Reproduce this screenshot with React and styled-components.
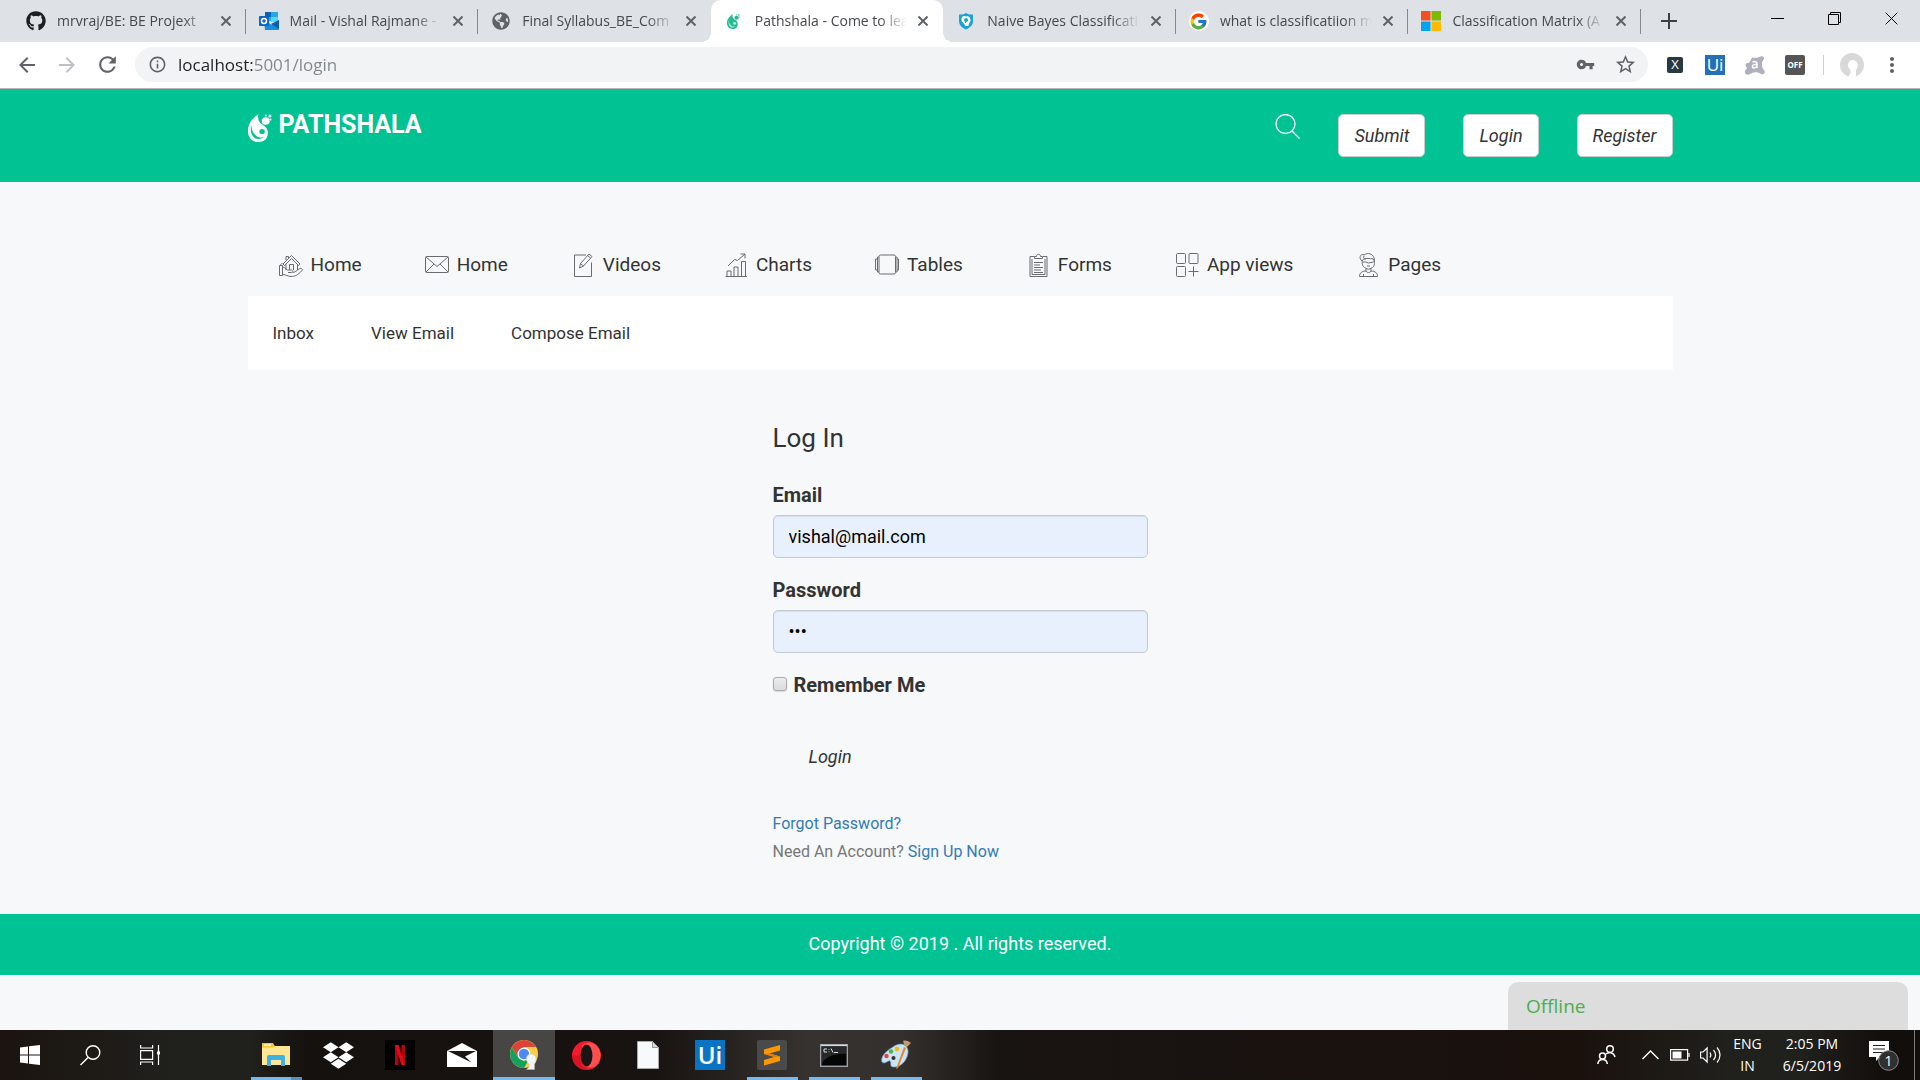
import React from "react";
import styled, { createGlobalStyle, css } from "styled-components";
import { FaGithub, FaDropbox, FaGlobeAmericas } from "react-icons/fa";
import { FcGoogle } from "react-icons/fc";
import {
  MdArrowBack,
  MdArrowForward,
  MdRefresh,
  MdInfoOutline,
  MdVpnKey,
  MdStarBorder,
  MdMoreVert,
} from "react-icons/md";

const GlobalStyle = createGlobalStyle`
  *, *::before, *::after { box-sizing: border-box; }
  body { margin: 0; background: #f6f8fa; color: #333; font: 18px/26px Roboto, sans-serif; }
  button, input { font: inherit; color: inherit; }
  svg { display: block; flex: none; }
`;

const green = "#00c292";
const systemFont = '"Open Sans", "Noto Sans", sans-serif';

const Screen = styled.div`
  display: flex;
  flex-direction: column;
  min-height: 100vh;
`;

const PlainButton = styled.button`
  display: flex;
  align-items: center;
  justify-content: center;
  padding: 0;
  border: 0;
  background: none;
`;

/* ---------- browser window ---------- */

const TabStrip = styled.div`
  display: flex;
  height: 42px;
  padding-left: 13px;
  background: #dee1e6;
  font-family: ${systemFont};
`;

const Tabs = styled.div`
  display: flex;
  flex: 1;
  min-width: 0;
`;

const Tab = styled.div`
  position: relative;
  display: flex;
  align-items: center;
  flex: 1 1 0;
  min-width: 0;
  padding: 0 12px 0 13px;
  ${(p) =>
    p.$active
      ? css`
          background: #fff;
          border-radius: 10px 10px 0 0;
          &::before,
          &::after {
            content: "";
            position: absolute;
            bottom: 0;
            width: 10px;
            height: 10px;
          }
          &::before {
            right: 100%;
            background: radial-gradient(circle at 0 0, transparent 10px, #fff 10px);
          }
          &::after {
            left: 100%;
            background: radial-gradient(circle at 100% 0, transparent 10px, #fff 10px);
          }
        `
      : ""}
  ${(p) =>
    p.$divider
      ? css`
          &::after {
            content: "";
            position: absolute;
            right: 0;
            top: 9px;
            width: 1px;
            height: 25px;
            background: #85888c;
          }
        `
      : ""}
`;

const TabButton = styled(PlainButton)`
  flex: 1;
  min-width: 0;
  justify-content: flex-start;
  gap: 11px;
  height: 42px;
`;

const TabTitle = styled.span`
  flex: 1;
  min-width: 0;
  white-space: nowrap;
  text-align: left;
  font-size: 14px;
  line-height: 20px;
  color: #45484c;
  mask-image: linear-gradient(to right, #000 calc(100% - 28px), transparent);
`;

const TabClose = styled(PlainButton)`
  width: 16px;
  height: 16px;
  margin-left: 8px;
`;

const WindowControls = styled.div`
  display: flex;
  align-items: center;
  width: 279px;
`;

const NewTab = styled(PlainButton)`
  width: 56px;
  height: 42px;
`;

const CaptionButton = styled(PlainButton)`
  width: 57px;
  height: 36px;
  align-self: flex-start;
  &:nth-child(2) {
    margin-left: auto;
  }
`;

const Toolbar = styled.div`
  display: flex;
  align-items: center;
  height: 47px;
  padding: 0 8px 1px 7px;
  background: #fff;
  border-bottom: 1px solid #b6b4b6;
  color: #5f6368;
  font-family: ${systemFont};
`;

const ToolButton = styled(PlainButton)`
  width: 40px;
  height: 34px;
  color: ${(p) => (p.disabled ? "#bdc1c6" : "#5f6368")};
`;

const Omnibox = styled.div`
  display: flex;
  align-items: center;
  flex: 1;
  height: 35px;
  margin: 0 7px 0 8px;
  padding: 0 3px 0 13px;
  border-radius: 18px;
  background: #f1f3f4;
`;

const Address = styled.input`
  flex: 1;
  min-width: 0;
  height: 35px;
  margin-left: 11px;
  padding: 0;
  border: 0;
  outline: 0;
  font-size: 17px;
  background: linear-gradient(to right, #202124 75px, #80868b 75px);
  background-clip: text;
  -webkit-text-fill-color: transparent;
`;

const ToolDivider = styled.span`
  width: 1px;
  height: 20px;
  margin: 0 8px;
  background: #cdd0d4;
`;

/* ---------- web page ---------- */

const Page = styled.div`
  position: relative;
  flex: 1;
  background: #f6f8fa;
`;

const Container = styled.div`
  width: 100%;
  max-width: 1425px;
  margin: 0 auto;
`;

const Header = styled.header`
  padding: 25px 0;
  background: ${green};
`;

const HeaderRow = styled(Container)`
  display: flex;
  align-items: flex-start;
`;

const Brand = styled.a`
  display: flex;
  gap: 7px;
  margin-right: auto;
  color: #fff;
  font-size: 25px;
  font-weight: 700;
  line-height: 22px;
  text-decoration: none;
`;

const HeaderActions = styled.div`
  display: flex;
  align-items: flex-start;
  gap: 38px;
`;

const ActionButton = styled.button`
  height: 43px;
  padding: 0 15px;
  border: 1px solid #ccc;
  border-radius: 5px;
  background: #fff;
  font-size: 18px;
  font-style: italic;
`;

const MainNav = styled.nav`
  display: flex;
  gap: 63px;
  padding: 69px 31px 17px;
`;

const NavLink = styled.a`
  display: flex;
  align-items: center;
  gap: 8px;
  color: #333;
  font-size: 19px;
  line-height: 28px;
  text-decoration: none;
`;

const SubNav = styled.nav`
  display: flex;
  gap: 57px;
  padding: 24px 25px;
  background: #fff;
`;

const SubLink = styled.a`
  color: #333;
  font-size: 17px;
  text-decoration: none;
`;

const LoginForm = styled.form`
  width: 375px;
  margin: 0 auto;
  padding: 54px 0 48px;
`;

const Title = styled.h1`
  margin: 0 0 30px;
  font-size: 26px;
  font-weight: 400;
  line-height: 28px;
`;

const Field = styled.div`
  display: flex;
  flex-direction: column;
  gap: 7px;
  margin-bottom: 19px;
`;

const Label = styled.label`
  font-size: 20px;
  font-weight: 700;
`;

const TextInput = styled.input`
  width: 100%;
  height: 43px;
  padding: 0 15px;
  border: 1px solid #c6c9cf;
  border-radius: 5px;
  outline: 0;
  background: #e8f0fe;
  box-shadow: inset 0 1px 1px rgba(0, 0, 0, 0.08);
  color: #000;
  font-size: 18px;
`;

const CheckRow = styled.div`
  display: flex;
  align-items: center;
  gap: 7px;
`;

const Checkbox = styled.input`
  appearance: none;
  width: 14px;
  height: 14px;
  margin: 0 0 3px;
  border: 1px solid #a9a9a9;
  border-radius: 3px;
  background: linear-gradient(#ececec, #dcdcdc);
  box-shadow: 0 1px 1px rgba(0, 0, 0, 0.12);
`;

const SubmitLink = styled.button`
  display: block;
  height: 43px;
  margin: 37px 0 32px;
  padding: 0 36px;
  border: 0;
  background: none;
  font-size: 18px;
  font-style: italic;
`;

const FormNote = styled.p`
  margin: 0;
  color: #777;
  font-size: 16px;
  line-height: 28px;
  a {
    color: #337ab7;
    text-decoration: none;
  }
`;

const Footer = styled.footer`
  padding: 17px 0 18px;
  background: ${green};
  color: #fff;
  text-align: center;
`;

const ChatStatus = styled.button`
  position: absolute;
  right: 12px;
  bottom: 0;
  width: 400px;
  height: 48px;
  padding: 0 18px;
  border: 0;
  border-radius: 10px 10px 0 0;
  background: #ddd;
  color: #4cae4c;
  font-family: ${systemFont};
  font-size: 19px;
  text-align: left;
`;

/* ---------- desktop taskbar ---------- */

const Taskbar = styled.div`
  display: flex;
  height: 50px;
  background: linear-gradient(
    to right,
    #1b1410 0,
    #20201c 9%,
    #20201c 13%,
    #15110f 16%,
    #181310 34%,
    #35322f 42%,
    #33302d 47%,
    #181412 52%,
    #1a110d 82%,
    #20201c 90%,
    #20201c 94%,
    #120e0c 98%
  );
  color: #fff;
  font-family: ${systemFont};
`;

const SystemButtons = styled.div`
  display: flex;
  width: 245px;
`;

const SystemButton = styled(PlainButton)`
  width: 60px;
  height: 50px;
`;

const Apps = styled.div`
  display: flex;
`;

const AppButton = styled(PlainButton)`
  position: relative;
  width: 62px;
  height: 50px;
  background: ${(p) => (p.$active ? "#484644" : "none")};
  &::after {
    content: "";
    display: ${(p) => (p.$running || p.$active ? "block" : "none")};
    position: absolute;
    bottom: 0;
    left: ${(p) => (p.$active ? "0" : "6px")};
    right: ${(p) => (p.$active ? "0" : "5px")};
    height: 3px;
    background: ${(p) =>
      p.$grouped ? "linear-gradient(to right, #76b9ed 40px, #5a8db8 40px)" : "#76b9ed"};
  }
`;

const Tray = styled.div`
  display: flex;
  align-items: center;
  margin-left: auto;
  padding-right: 5px;
`;

const TrayButton = styled(PlainButton)`
  width: ${(p) => p.$width || 30}px;
  height: 50px;
`;

const TrayText = styled(PlainButton)`
  flex-direction: column;
  width: ${(p) => p.$width}px;
  height: 50px;
  font-size: 14px;
  line-height: 22px;
`;

const ShowDesktop = styled.span`
  width: 1px;
  height: 50px;
  background: #7b7977;
`;

/* ---------- drawings ---------- */

const DropShape = ({ width, height, fill, hole }) => (
  <svg width={width} height={height} viewBox="1 1 23 28" preserveAspectRatio="none">
    <path d="M11 1C4 6 0 13 1 20c1 6 5 9 10 9 6 0 9-4 9-9 0-5-3-7-6-9-3-2-4-6-3-10z" fill={fill} />
    <path d="M4 12c-1 5 0 11 4 13.500 3 1 6 .5 8-1.500-3 1-6 .5-8-2C5 19 4.500 16 4 12z" fill={hole} />
    <circle cx="14.500" cy="18.500" r="2.600" fill={hole} />
    <circle cx="18" cy="8" r="3.800" fill={fill} />
    <circle cx="22" cy="3" r="1.500" fill={fill} />
    <circle cx="18" cy="2.500" r="1" fill={fill} />
    <circle cx="22.500" cy="6.500" r="1" fill={fill} />
  </svg>
);

const Cross = ({ size = 10, color = "#5f6368", weight = 2 }) => (
  <svg width={size} height={size} viewBox="0 0 10 10" stroke={color} strokeWidth={(weight * 10) / size}>
    <path d="M.5.5l9 9M9.500.5l-9 9" />
  </svg>
);

const OutlookIcon = () => (
  <svg width="20" height="20" viewBox="0 0 20 20">
    <path d="M6 1h13v9H6z" fill="#28a8ea" />
    <path d="M6 1h6v5H6z" fill="#0364b8" />
    <path d="M12 6h7v5h-7z" fill="#50d9ff" />
    <path d="M5 9l8 5 7-5v9a1 1 0 0 1-1 1H6z" fill="#1490df" />
    <path d="M20 9v9l-8-5z" fill="#0f5fa8" />
    <rect y="5" width="10" height="10" rx="1" fill="#0a66c2" />
    <circle cx="5" cy="10" r="2.500" fill="none" stroke="#fff" strokeWidth="1.500" />
  </svg>
);

const ShieldIcon = () => (
  <svg width="20" height="20" viewBox="0 0 20 20">
    <path d="M10 2c3 2 5 1.500 7 1.500V10c0 5-4 7-7 8.500C7 17 3 15 3 10V3.500C5 3.500 7 4 10 2z" fill="#1aa3d9" />
    <path d="M5.500 8.500c0-4 3-4 4.500-3 2-1 4.500 0 4.500 3.500 0 3-2 3-2 6H9c0-3-3.500-3-3.500-6.500z" fill="#fff" />
    <circle cx="10" cy="9" r="2" fill="#1aa3d9" />
    <path d="M9 12l3-3" stroke="#1aa3d9" />
  </svg>
);

const MicrosoftIcon = () => (
  <svg width="20" height="20" viewBox="0 0 20 20">
    <path d="M0 0h9.500v9.500H0z" fill="#f25022" />
    <path d="M10.500 0H20v9.500h-9.500z" fill="#7fba00" />
    <path d="M0 10.500h9.500V20H0z" fill="#00a4ef" />
    <path d="M10.500 10.500H20V20h-9.500z" fill="#ffb900" />
  </svg>
);

const Badge = styled.span`
  display: flex;
  align-items: center;
  justify-content: center;
  width: ${(p) => p.$size}px;
  height: ${(p) => p.$size}px;
  border-radius: ${(p) => p.$radius || 0}px;
  background: ${(p) => p.$bg};
  color: #fff;
  font: ${(p) => p.$weight || 400} ${(p) => p.$font}px/1 ${systemFont};
`;

const NavIcon = ({ children }) => (
  <svg width="24" height="24" viewBox="0 0 24 24" fill="none" stroke="#6b6b70" strokeWidth="1">
    {children}
  </svg>
);

const navItems = [
  ["Home",
    <NavIcon key="i">
      <path d="M4 11L12.500 2.500 21 11l-1.500 1.500-7-7-7 7zM7 7V3.500h2.500V5M7 11.500V17M18.500 11.500V17M10.500 17v-5.500h4V17" />
      <path d="M.5 12.500h3v10h-3zM3.500 14c3 0 3 2.500 5 3h4c2 0 1.500 2.500 0 2.500H9M13.500 19.500c3 0 5-3 7.500-4 2-.5 3 1 1.500 2.500C19 22 16 23.500 12 23.500c-3 0-5-2-8.500-2M3.500 10.500c-2 0-2 2-2 2" />
    </NavIcon>],
  ["Home",
    <NavIcon key="i">
      <rect x=".5" y="3.500" width="23" height="16" rx="1" />
      <path d="M1 4l11 9.500L23 4M1 19l8-8M23 19l-8-8" />
    </NavIcon>],
  ["Videos",
    <NavIcon key="i">
      <path d="M15 2H3.500v21.500h17V9.500M8.500 15l1-4.500L18 1l3 2.500-8.500 9.500zM9.500 10.500l3 2.500M16.500 2.500l3 2.500" />
    </NavIcon>],
  ["Charts",
    <NavIcon key="i">
      <path d="M1.500 23.500h21.500M3 23v-5h4v5M10 23v-9h4v9M17.500 23V8.500h4V23M4 13l6.500-6.500 3 1L21 1M16.500 1H21v4.500" />
    </NavIcon>],
  ["Tables",
    <NavIcon key="i">
      <rect x="4" y="2" width="16.500" height="19" rx="1.500" />
      <path d="M4 4H2.500v15H4M20.500 4H22v15h-1.500M2.500 6h-2v11h2M22 6h1.500v11H22" />
    </NavIcon>],
  ["Forms",
    <NavIcon key="i">
      <path d="M8 3.500H4v20h17v-20h-4M6 6v15.500h13V6M8.500 5.500v-2h2c0-3 4-3 4 0h2v2z" />
      <path d="M8 9.500h9M8 12h6M8 14.500h9M8 17h7M8 19.500h9" />
    </NavIcon>],
  ["App views",
    <NavIcon key="i">
      <rect x="1.500" y=".5" width="9" height="10" rx="1" />
      <rect x="14" y=".5" width="9" height="10" rx="1" />
      <rect x="1.500" y="13.500" width="9" height="10" rx="1" />
      <path d="M18.500 13.500v10M13.500 18.500h10" />
    </NavIcon>],
  ["Pages",
    <NavIcon key="i">
      <path d="M6.500 7c-1 3 0 7 3 8 2 1.500 4 1.500 6 0 3-1 3.500-5 2.500-8-1-2-3-1-5-1.500C10 5 8 6 6.500 7zM6 8C2 5 5 0 8 2c4-3 9-1 10 3 1 1 0 4 0 4M8 3c-1 2 0 3 2 3M10 15.500v3M15 15.500v3M10 18c-4 0-6.500 2-6.500 5.500h18C21.500 20 19 18 15 18c-1 2-4 2-5 0zM6.500 9h3l3 1 5-1M11 13h3M7.500 21v2M17.500 21v2" />
    </NavIcon>],
];

const tabs = [
  ["mrvraj/BE: BE Projext", <FaGithub key="i" size={20} color="#1b1f23" />],
  ["Mail - Vishal Rajmane -", <OutlookIcon key="i" />],
  ["Final Syllabus_BE_Com", <FaGlobeAmericas key="i" size={18} color="#5f6368" />],
  ["Pathshala - Come to lea", <DropShape key="i" width={13} height={15} fill="#25bb93" hole="#b5ecdc" />],
  ["Naive Bayes Classificati", <ShieldIcon key="i" />],
  ["what is classificatiion m", <Badge key="i" $size={20} $radius={10} $bg="#fff"><FcGoogle size={19} /></Badge>],
  ["Classification Matrix (A", <MicrosoftIcon key="i" />],
];

const WindowsLogo = () => (
  <svg width="20" height="20" viewBox="0 0 20 20" fill="#fff">
    <path d="M0 2.500l8-1V9.500H0zM9 1.300L20 0v9.500H9zM0 10.500h8v8l-8-1zM9 10.500h11V20L9 18.700z" />
  </svg>
);

const TaskSearch = () => (
  <svg width="21" height="21" viewBox="0 0 21 21" fill="none" stroke="#fff" strokeWidth="1.400">
    <circle cx="13" cy="7.500" r="6.800" />
    <path d="M8 12.500L.5 20" />
  </svg>
);

const TaskView = () => (
  <svg width="20" height="20" viewBox="0 0 20 20" fill="none" stroke="#fff" strokeWidth="1.200">
    <path d="M.6 0v3h12V0M.6 20v-3h12v3M.6 5.600h12v8.800H.6zM18.500 0v20" />
    <path d="M17 6.500h3v3h-3z" fill="#fff" stroke="none" />
  </svg>
);

const FolderIcon = () => (
  <svg width="28" height="24" viewBox="0 0 28 24">
    <path d="M0 1h11l2 3h15v18H0z" fill="#f5c231" />
    <path d="M0 3h28v19H0z" fill="#ffe694" />
    <path d="M0 0h11l2 3.500-2 1H0z" fill="#f8c433" />
    <path d="M2 1.500h7v1.500H2z" fill="#fff" />
    <path d="M5 14a2 2 0 0 1 2-2h14a2 2 0 0 1 2 2v9h-4v-6H9v6H5z" fill="#3bb1e6" />
  </svg>
);

const NetflixIcon = () => (
  <svg width="30" height="30" viewBox="0 0 30 30">
    <path d="M0 0h30v30H0z" />
    <path d="M10 5h3.500v20H10zM16.500 5H20v20h-3.500z" fill="#b1060f" />
    <path d="M10 5h3.500L20 25h-3.500z" fill="#e50914" />
  </svg>
);

const MailIcon = () => (
  <svg width="30" height="24" viewBox="0 0 30 24">
    <path d="M0 8L15 0l15 8v16H0z" fill="#fff" />
    <path d="M1 8h28L18 13.500l6.500 6L1 8z" fill="#1b1613" />
  </svg>
);

const ChromeIcon = () => (
  <svg width="30" height="30" viewBox="0 0 30 30">
    <circle cx="15" cy="14" r="14" fill="#ffcd42" />
    <path d="M15 7h12.100A14 14 0 0 0 2.900 7l6 10z" fill="#dc4437" />
    <path d="M2.900 7A14 14 0 0 0 15 28l6-10.500-6 3.500-6-3.500z" fill="#12a15f" />
    <circle cx="15" cy="14" r="6.500" fill="#fff" />
    <circle cx="15" cy="14" r="5.200" fill="#4c8bf5" />
    <path d="M22 14c-3.500 0-5 3-4.500 6 .3 2 1.500 3 2.500 4v3l-2.500 2.500h8V24c1.500-2 2-4 1.500-6-.5-2.500-2.500-4-5-4z" fill="#f4f4f4" stroke="#bbb" strokeWidth=".5" />
  </svg>
);

const OperaIcon = () => (
  <svg width="29" height="29" viewBox="0 0 29 29">
    <circle cx="14.500" cy="14.500" r="14.500" fill="#f21a2c" />
    <path d="M10 4.500C14 0 21 1 24 4a14.500 14.500 0 0 1 0 21c-4 4-10 4-14-.5z" fill="#ff5050" />
    <ellipse cx="14.500" cy="14.500" rx="6" ry="11" fill="#1a1512" />
    <path d="M0 14.500a14.500 14.500 0 0 0 14.500 14.500c4 0 7-1 9.500-4-8 4-15-1-15.500-10.500z" fill="#c90f22" opacity=".6" />
  </svg>
);

const FileIcon = () => (
  <svg width="22" height="28" viewBox="0 0 22 28">
    <path d="M.5.5h15l6 6v21H.5z" fill="#f7f9fa" stroke="#a8a8a8" />
    <path d="M15.500.5v6h6z" fill="#d8dadb" stroke="#999" />
  </svg>
);

const SublimeIcon = () => (
  <svg width="30" height="30" viewBox="0 0 30 30">
    <rect width="30" height="30" rx="2" fill="#4a4a4a" />
    <path d="M7 9.500L23 5v5.500L12.500 13.500 23 16.500V21L7 25.500V20l10.500-3L7 14z" fill="#ff9800" />
    <path d="M7 14l5.500-.5L23 16.500 17.500 17z" fill="#e07f00" />
  </svg>
);

const TerminalIcon = () => (
  <svg width="28" height="23" viewBox="0 0 28 23">
    <rect x=".7" y=".7" width="26.600" height="21.600" fill="#050505" stroke="#9ea2a8" strokeWidth="1.400" />
    <path d="M1 1.500h26" stroke="#d5d9de" strokeWidth="1.500" />
    <path d="M2 3h24v7C15 9 6 13 2 19z" fill="#26282b" />
    <path d="M4 5h3M4 8h3M4 5v3M9 5v.8M9 7.500v.7M11 4.500l2 4M14 8.500h4" stroke="#ddd" fill="none" />
  </svg>
);

const PaintIcon = () => (
  <svg width="30" height="30" viewBox="0 0 30 30">
    <path d="M12 7C20 1 28 5 27 13c-1 8-8 15-15 14-4-1-1-4-3-6-2-1-5 4-8 1-2-5 4-11 11-15z" fill="#cbe4f2" stroke="#6b9dbc" strokeWidth=".7" />
    <circle cx="5.500" cy="16" r="2.200" fill="#e04640" />
    <circle cx="10" cy="11.500" r="2.200" fill="#4fb34a" />
    <circle cx="16" cy="9" r="2.400" fill="#f4b72c" />
    <circle cx="12.500" cy="18" r="2" fill="#35322f" />
    <path d="M15 29l8-22 2 1-8 20z" fill="#e58729" />
    <path d="M22 1c2-1 6 0 8 2l-4 4c-3-1-3-3-4-6z" fill="#c49a6c" />
  </svg>
);

const apps = [
  { name: "File Explorer", icon: <FolderIcon />, running: true, grouped: true },
  { name: "Dropbox", icon: <FaDropbox size={31} color="#fff" /> },
  { name: "Netflix", icon: <NetflixIcon /> },
  { name: "Mail", icon: <MailIcon /> },
  { name: "Chrome", icon: <ChromeIcon />, active: true },
  { name: "Opera", icon: <OperaIcon /> },
  { name: "Document", icon: <FileIcon /> },
  { name: "UiPath", icon: <Badge $size={30} $bg="#0a74c4" $font={24} $weight={600}>Ui</Badge> },
  { name: "Sublime Text", icon: <SublimeIcon />, running: true },
  { name: "Command Prompt", icon: <TerminalIcon />, running: true },
  { name: "Paint", icon: <PaintIcon />, running: true },
];

function Browser() {
  return (
    <>
      <TabStrip>
        <Tabs>
          {tabs.map(([title, icon], i) => (
            <Tab key={title} $active={i === 3} $divider={i !== 2 && i !== 3}>
              <TabButton>
                <Badge as="span" $size={20} $font={12} $bg="none">{icon}</Badge>
                <TabTitle>{title}</TabTitle>
              </TabButton>
              <TabClose aria-label="Close tab"><Cross /></TabClose>
            </Tab>
          ))}
        </Tabs>
        <WindowControls>
          <NewTab aria-label="New tab">
            <svg width="16" height="16" viewBox="0 0 16 16" stroke="#3c4043" strokeWidth="2"><path d="M8 0v16M0 8h16" /></svg>
          </NewTab>
          <CaptionButton aria-label="Minimize">
            <svg width="13" height="13" viewBox="0 0 13 13" stroke="#000"><path d="M0 6.500h13" /></svg>
          </CaptionButton>
          <CaptionButton aria-label="Restore">
            <svg width="13" height="13" viewBox="0 0 13 13" stroke="#000" fill="none"><path d="M.5 2.500h10v10H.5zM2.500 2.500v-2h10v10h-2" /></svg>
          </CaptionButton>
          <CaptionButton aria-label="Close"><Cross size={13} color="#000" weight={1} /></CaptionButton>
        </WindowControls>
      </TabStrip>
      <Toolbar>
        <ToolButton aria-label="Back"><MdArrowBack size={24} /></ToolButton>
        <ToolButton aria-label="Forward" disabled><MdArrowForward size={24} /></ToolButton>
        <ToolButton aria-label="Reload"><MdRefresh size={25} /></ToolButton>
        <Omnibox>
          <MdInfoOutline size={19} />
          <Address aria-label="Address" defaultValue="localhost:5001/login" />
          <ToolButton aria-label="Passwords"><MdVpnKey size={19} /></ToolButton>
          <ToolButton aria-label="Bookmark"><MdStarBorder size={23} /></ToolButton>
        </Omnibox>
        <ToolButton aria-label="XPath helper"><Badge $size={16} $radius={2} $bg="#263a44" $font={13}>X</Badge></ToolButton>
        <ToolButton aria-label="UiPath"><Badge $size={20} $bg="#2470b8" $font={17}>Ui</Badge></ToolButton>
        <ToolButton aria-label="Avast">
          <svg width="20" height="20" viewBox="0 0 20 20">
            <path d="M7 2.500c3 .5 5 .5 7-.5 2-1.500 5-1 5 1s-2 3-2 5c0 3 0 5 2 7 2 3-1 5-3 4-3-2-6-2-9-1-3 2-6 2-7 0s1-3 2-5c-2-2-2-5 1-5 2 0 2.500-3 4-5.500z" fill="#b0b0bd" />
            <path d="M7.500 7c3-1 4.500 0 4.500 2v4M12 9.500c-4-.5-5 1-4.500 2.500 1 1.500 3 1 4.500-.5" stroke="#fff" strokeWidth="1.500" fill="none" />
          </svg>
        </ToolButton>
        <ToolButton aria-label="Extension off"><Badge $size={20} $radius={2} $bg="#555" $font={8} $weight={700}>OFF</Badge></ToolButton>
        <ToolDivider />
        <ToolButton aria-label="Profile">
          <svg width="24" height="24" viewBox="0 0 24 24">
            <circle cx="12" cy="12" r="12" fill="#d8d8d8" />
            <path d="M12.500 7c-3 0-5 3-4.500 6 .5 2 1.500 3 2.500 4v3L8 23.500a12 12 0 0 0 8 0V17c1.500-2 2-4 1.500-6-.5-2.500-2.500-4-5-4z" fill="#fff" />
          </svg>
        </ToolButton>
        <ToolButton aria-label="Menu"><MdMoreVert size={24} /></ToolButton>
      </Toolbar>
    </>
  );
}

function LoginPage() {
  return (
    <Page>
      <Header>
        <HeaderRow>
          <Brand href="#">
            <DropShape width={24} height={28} fill="#fff" hole={green} />
            PATHSHALA
          </Brand>
          <HeaderActions>
            <PlainButton aria-label="Search">
              <svg width="25" height="25" viewBox="0 0 25 25" fill="none" stroke="#fff" strokeWidth="1.300">
                <circle cx="10.500" cy="10" r="9.500" />
                <path d="M17 17l7.500 7.500" />
              </svg>
            </PlainButton>
            <ActionButton>Submit</ActionButton>
            <ActionButton>Login</ActionButton>
            <ActionButton>Register</ActionButton>
          </HeaderActions>
        </HeaderRow>
      </Header>
      <Container>
        <MainNav>
          {navItems.map(([label, icon], i) => (
            <NavLink href="#" key={i}>{icon}{label}</NavLink>
          ))}
        </MainNav>
        <SubNav>
          <SubLink href="#">Inbox</SubLink>
          <SubLink href="#">View Email</SubLink>
          <SubLink href="#">Compose Email</SubLink>
        </SubNav>
      </Container>
      <LoginForm onSubmit={(e) => e.preventDefault()}>
        <Title>Log In</Title>
        <Field>
          <Label htmlFor="email">Email</Label>
          <TextInput id="email" type="email" defaultValue="vishal@mail.com" />
        </Field>
        <Field>
          <Label htmlFor="password">Password</Label>
          <TextInput id="password" type="password" defaultValue="123" />
        </Field>
        <CheckRow>
          <Checkbox id="remember" type="checkbox" />
          <Label htmlFor="remember">Remember Me</Label>
        </CheckRow>
        <SubmitLink type="submit">Login</SubmitLink>
        <FormNote><a href="#">Forgot Password?</a></FormNote>
        <FormNote>Need An Account? <a href="#">Sign Up Now</a></FormNote>
      </LoginForm>
      <Footer>Copyright © 2019 . All rights reserved.</Footer>
      <ChatStatus>Offline</ChatStatus>
    </Page>
  );
}

function DesktopBar() {
  return (
    <Taskbar>
      <SystemButtons>
        <SystemButton aria-label="Start"><WindowsLogo /></SystemButton>
        <SystemButton aria-label="Search"><TaskSearch /></SystemButton>
        <SystemButton aria-label="Task view"><TaskView /></SystemButton>
      </SystemButtons>
      <Apps>
        {apps.map((app) => (
          <AppButton key={app.name} aria-label={app.name} $running={app.running} $active={app.active} $grouped={app.grouped}>
            {app.icon}
          </AppButton>
        ))}
      </Apps>
      <Tray>
        <TrayButton aria-label="People" $width={58}>
          <svg width="19" height="20" viewBox="0 0 19 20" fill="none" stroke="#fff" strokeWidth="1.500">
            <circle cx="13" cy="4" r="3.300" />
            <circle cx="5.500" cy="11" r="3" />
            <path d="M9 9c2-2 8-2 9 3M.8 19c.5-6 9-6 9.500 0" />
          </svg>
        </TrayButton>
        <TrayButton aria-label="Hidden icons">
          <svg width="17" height="10" viewBox="0 0 17 10" fill="none" stroke="#fff" strokeWidth="1.400"><path d="M.5 9l8-8 8 8" /></svg>
        </TrayButton>
        <TrayButton aria-label="Battery">
          <svg width="20" height="12" viewBox="0 0 20 12" fill="none" stroke="#fff" strokeWidth="1.200">
            <rect x=".6" y=".6" width="17" height="10.500" />
            <path d="M19 4v4" />
            <path d="M2.500 2.500h9v7h-9z" fill="#fff" stroke="none" />
          </svg>
        </TrayButton>
        <TrayButton aria-label="Volume">
          <svg width="21" height="18" viewBox="0 0 21 18" fill="none" stroke="#fff" strokeWidth="1.200">
            <path d="M.6 6v6h2.500l4 4V2l-4 4zM10 6.500c1 1.500 1 3.500 0 5M13.500 4c2.500 3 2.500 7 0 10M17 1.500c4 4.500 4 10.500 0 15" />
          </svg>
        </TrayButton>
        <TrayText $width={45}><span>ENG</span><span>IN</span></TrayText>
        <TrayText $width={84}><span>2:05 PM</span><span>6/5/2019</span></TrayText>
        <TrayButton aria-label="1 notification" $width={60}>
          <svg width="32" height="31" viewBox="0 0 32 31">
            <path d="M1 1h20v16h-9l-4 4v-4H1z" fill="#fff" />
            <path d="M5 5.500h12M5 9h12M5 12.500h12" stroke="#222" />
            <circle cx="20.500" cy="20.500" r="9.800" fill="#303030" stroke="#8a8a8a" />
            <text x="20.500" y="25.500" textAnchor="middle" fill="#fff" fontSize="14" fontFamily="Open Sans, sans-serif">1</text>
          </svg>
        </TrayButton>
        <ShowDesktop />
      </Tray>
    </Taskbar>
  );
}

export default function App() {
  return (
    <Screen>
      <GlobalStyle />
      <Browser />
      <LoginPage />
      <DesktopBar />
    </Screen>
  );
}
